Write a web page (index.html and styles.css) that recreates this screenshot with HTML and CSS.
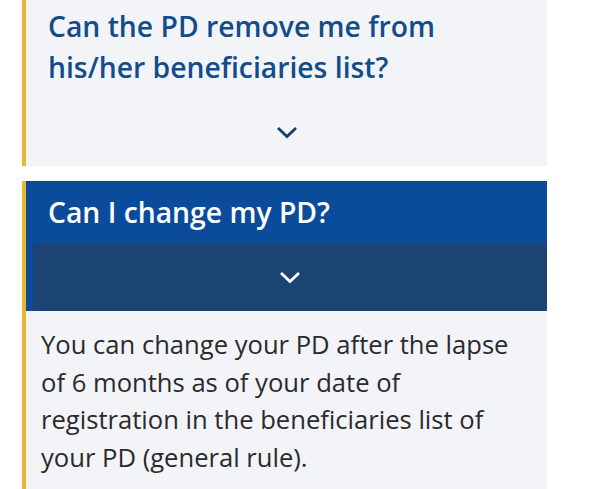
FILE: index.html
```html
<!DOCTYPE html>
<html lang="en">
<head>
  <meta charset="UTF-8">
  <title>FAQ</title>
  <link rel="stylesheet" href="styles.css">
</head>
<body>
<div class="faq">
  <div class="item">
    <h3 class="question">Can the PD remove me from his/her beneficiaries list?</h3>
    <div class="toggle">
      <svg class="chevron" width="22" height="13" viewBox="0 0 22 13"><polyline points="2,2 11,10.5 20,2"/></svg>
    </div>
  </div>

  <div class="item open">
    <div class="head">
      <h3 class="question">Can I change my PD?</h3>
      <div class="toggle">
        <svg class="chevron" width="22" height="13" viewBox="0 0 22 13"><polyline points="2,2 11,10.5 20,2"/></svg>
      </div>
    </div>
    <div class="answer">
      You can change your PD after the lapse of 6 months as of your date of registration in the beneficiaries list of your PD (general rule).
    </div>
  </div>
</div>
</body>
</html>
```

FILE: styles.css
```css
body {
  margin: 0;
  background-color: #fff;
  font-family: "Open Sans", "Noto Sans", sans-serif;
}

.faq {
  width: 525px;
  margin: -5px 0 0 22px;
  display: flex;
  flex-direction: column;
  gap: 15px;
}

.item {
  border-left: 4px solid #e8b530;
  background-color: #f2f4f8;
}

.question {
  margin: 0;
  padding: 11px 22px 10px;
  font-size: 28.3px;
  font-weight: 600;
  line-height: 41px;
  color: #124c8b;
}

.toggle {
  height: 68px;
  display: flex;
  align-items: center;
  justify-content: center;
}

.chevron polyline {
  fill: none;
  stroke: #1b3f6d;
  stroke-width: 2.8;
}

.open .head {
  background-color: #0b4b9b;
}

.open .question {
  color: #fff;
}

.open .toggle {
  margin-left: 7px;
  background-color: #1b4472;
}

.open .chevron polyline {
  stroke: #fff;
}

.answer {
  padding: 15px 15px 20px;
  font-size: 25.6px;
  line-height: 37.5px;
  color: #2b2b2b;
}
```
